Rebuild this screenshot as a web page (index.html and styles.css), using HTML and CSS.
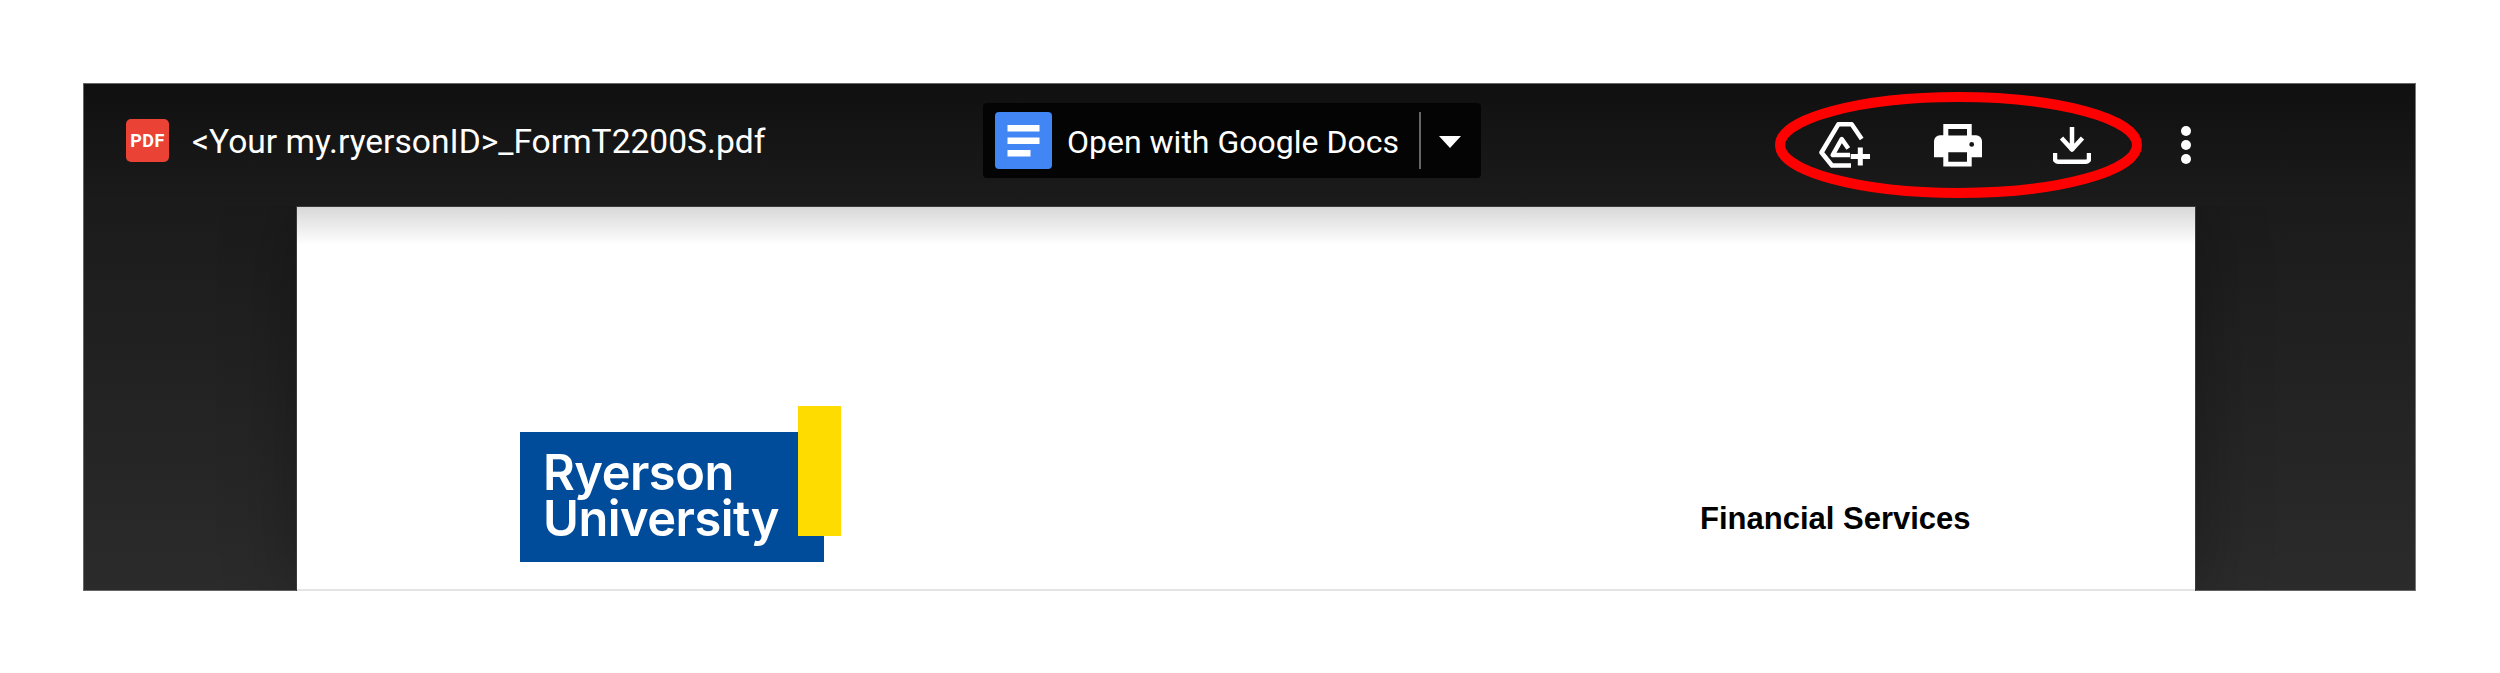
FILE: index.html
```html
<!DOCTYPE html>
<html lang="en">
<head>
<meta charset="utf-8">
<title>FormT2200S.pdf</title>
<link rel="stylesheet" href="styles.css">
</head>
<body>
<main class="viewer">
  <header class="toolbar">
    <div class="file">
      <span class="pdf-icon">PDF</span>
      <span class="file-name">&lt;Your my.ryersonID&gt;_FormT2200S.pdf</span>
    </div>
    <div class="open-with">
      <svg class="docs-icon" viewBox="0 0 57 57" aria-hidden="true">
        <rect width="57" height="57" rx="4" fill="#4285f4"/>
        <rect x="12.500" y="13" width="32" height="6.500" fill="#fff"/>
        <rect x="12.500" y="25.500" width="32" height="6.500" fill="#fff"/>
        <rect x="12.500" y="38" width="23" height="6.500" fill="#fff"/>
      </svg>
      <span class="open-label">Open with Google Docs</span>
      <span class="open-divider"></span>
      <span class="open-caret"></span>
    </div>
    <div class="actions">
      <span class="action">
        <svg class="icon-drive" viewBox="0 0 51 46" aria-hidden="true">
          <path class="line" d="M42.700 17 32.700 2.300H19.300L2.500 30.500 13 43.500H32"/>
          <path class="line" d="M29.300 26.500 22.700 17 13.700 33H31"/>
          <path class="line thick" d="M41.300 25.500V43.500M31.700 34.500H51"/>
        </svg>
      </span>
      <span class="action">
        <svg class="icon-print" viewBox="0 0 48 43" aria-hidden="true">
          <path fill="#fff" fill-rule="evenodd" d="M9.300 0H37.700V11.300H42A6 6 0 0 1 48 17.300V33.300H37.700V42.500H9.300V33.300H0V17.300A6 6 0 0 1 6 11.300H9.300ZM14.300 5V11.500H33V5ZM14.300 28.300V37.700H33V28.300ZM37.700 18A2.400 2.400 0 1 0 37.700 22.800A2.400 2.400 0 1 0 37.700 18Z"/>
        </svg>
      </span>
      <span class="action">
        <svg class="icon-download" viewBox="0 0 38 37" aria-hidden="true">
          <path class="line stem" d="M19 0V24M8.500 11 19 22.500 29.500 11"/>
          <path class="line" d="M2 26V31.500A3 3 0 0 0 5 34.700H33A3 3 0 0 0 36 31.500V26"/>
        </svg>
      </span>
      <span class="action">
        <span class="dots"><i></i><i></i><i></i></span>
      </span>
    </div>
  </header>
  <section class="page">
    <div class="logo">
      <div class="logo-blue">Ryerson<br>University</div>
      <div class="logo-yellow"></div>
    </div>
    <div class="dept">Financial Services</div>
  </section>
  <svg class="highlight" viewBox="0 0 367 106" aria-hidden="true">
    <ellipse cx="183.500" cy="53" rx="178.500" ry="48"/>
  </svg>
</main>
</body>
</html>
```

FILE: styles.css
```css
* { box-sizing: border-box; }

html, body { margin: 0; background: #fff; }

body {
  padding: 83px 84px 82px 83px;
  font-family: Roboto, "Liberation Sans", sans-serif;
}

.viewer {
  position: relative;
  height: 508px;
  display: flex;
  flex-direction: column;
  align-items: stretch;
  background: linear-gradient(#101010, #1b1b1b 24%, #2b2b2b);
  box-shadow: inset 0 1px 0 #666, inset 1px 0 0 #666, inset -1px 0 0 #777, inset 0 -1px 0 #666;
}

.toolbar {
  flex: none;
  height: 124px;
  display: grid;
  grid-template-columns: 900px 498px 1fr;
  color: #fff;
}

.file {
  display: flex;
  align-items: center;
  gap: 23px;
  padding: 0 0 9px 43px;
}

.pdf-icon {
  width: 43px;
  height: 43px;
  flex: none;
  display: flex;
  align-items: center;
  justify-content: center;
  border-radius: 5px;
  background: #ea4335;
  font: 700 18px Roboto, sans-serif;
  letter-spacing: 0.5px;
}

.file-name {
  margin-top: 2px;
  font-size: 33.600px;
  white-space: nowrap;
}

.open-with {
  align-self: start;
  margin-top: 20px;
  height: 75px;
  display: flex;
  align-items: center;
  padding-left: 12px;
  background: #040404;
  border-radius: 4px;
}

.docs-icon { width: 57px; height: 57px; flex: none; }

.open-label {
  margin: 2px 0 0 15px;
  width: 332px;
  font-size: 32px;
  white-space: nowrap;
}

.open-divider {
  width: 2px;
  height: 57px;
  margin-left: 20px;
  background: #666;
}

.open-caret {
  margin: 2px 0 0 18px;
  border-left: 11.500px solid transparent;
  border-right: 11.500px solid transparent;
  border-top: 12px solid #fff;
}

.actions {
  justify-self: end;
  display: flex;
  align-items: center;
  padding: 0 173px 0 0;
}

.action {
  width: 114px;
  display: flex;
  justify-content: center;
  align-items: center;
}

.icon-drive { width: 51px; height: 46px; }
.icon-print { width: 48px; height: 43px; }
.icon-download { width: 38px; height: 37px; }

.line {
  fill: none;
  stroke: #fff;
  stroke-width: 4.500;
  stroke-linejoin: round;
}

.thick { stroke-width: 5; }
.stem { stroke-width: 4.500; }

.dots {
  display: flex;
  flex-direction: column;
  gap: 4px;
}

.dots i {
  width: 10px;
  height: 10px;
  border-radius: 50%;
  background: #fff;
}

.page {
  flex: 1;
  width: 1898px;
  margin-left: 214px;
  padding: 199px 0 0 223px;
  display: flex;
  background: linear-gradient(#d8d8d8, #fff 38px);
  border-bottom: 2px solid #e4e4e4;
  box-shadow: 0 0 0 1px #3a3a3a, 0 0 70px rgba(0, 0, 0, 0.3);
  clip-path: inset(-1px -80px 0 -80px);
}

.logo {
  position: relative;
  width: 321px;
  height: 156px;
  flex: none;
}

.logo-blue {
  position: absolute;
  left: 0;
  top: 26px;
  width: 304px;
  height: 130px;
  padding: 18px 0 0 23px;
  background: #004c9b;
  color: #fff;
  font: 600 48.800px/46px Inter, "Liberation Sans", sans-serif;
  letter-spacing: -0.5px;
}

.logo-yellow {
  position: absolute;
  left: 278px;
  top: 0;
  width: 43px;
  height: 130px;
  background: #ffdc00;
}

.dept {
  margin: 95px 0 0 859px;
  color: #000;
  font: 700 31px "Liberation Sans", sans-serif;
  white-space: nowrap;
}

.highlight {
  position: absolute;
  left: 1692px;
  top: 9px;
  width: 367px;
  height: 106px;
  overflow: visible;
}

.highlight ellipse {
  fill: none;
  stroke: #f00;
  stroke-width: 10;
}
```
